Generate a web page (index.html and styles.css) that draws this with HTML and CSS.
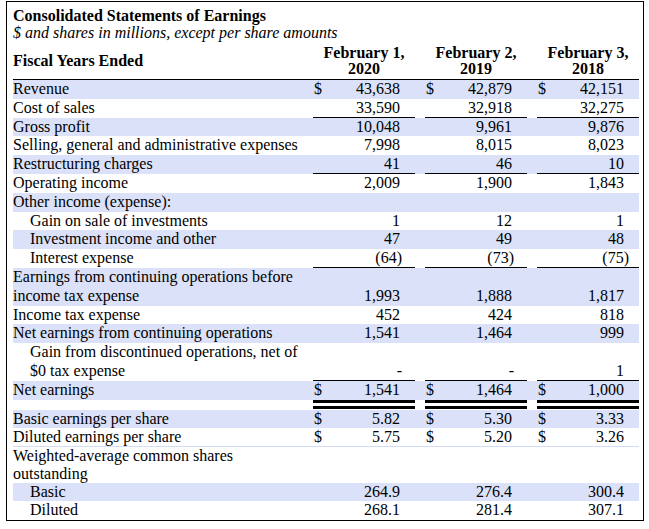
FILE: index.html
```html
<!DOCTYPE html>
<html lang="en">
<head>
<meta charset="utf-8">
<title>Consolidated Statements of Earnings</title>
<link rel="stylesheet" href="styles.css">
</head>
<body>
<div class="sheet">
  <div class="title">
    <div class="heading">Consolidated Statements of Earnings</div>
    <div class="subtitle">$ and shares in millions, except per share amounts</div>
  </div>
  <div class="head">
    <div class="hlbl">Fiscal Years Ended</div>
    <div class="hcol">February 1,<br>2020</div>
    <div class="hcol">February 2,<br>2019</div>
    <div class="hcol">February 3,<br>2018</div>
  </div>

  <div class="g1">
    <div class="row shade">
      <div class="lbl">Revenue</div>
      <div class="val"><span>$</span><span class="n">43,638</span></div>
      <div class="val"><span>$</span><span class="n">42,879</span></div>
      <div class="val"><span>$</span><span class="n">42,151</span></div>
    </div>
    <div class="row">
      <div class="lbl">Cost of sales</div>
      <div class="val ul"><span class="n">33,590</span></div>
      <div class="val ul"><span class="n">32,918</span></div>
      <div class="val ul"><span class="n">32,275</span></div>
    </div>
    <div class="row shade">
      <div class="lbl">Gross profit</div>
      <div class="val"><span class="n">10,048</span></div>
      <div class="val"><span class="n">9,961</span></div>
      <div class="val"><span class="n">9,876</span></div>
    </div>
    <div class="row">
      <div class="lbl">Selling, general and administrative expenses</div>
      <div class="val"><span class="n">7,998</span></div>
      <div class="val"><span class="n">8,015</span></div>
      <div class="val"><span class="n">8,023</span></div>
    </div>
    <div class="row shade">
      <div class="lbl">Restructuring charges</div>
      <div class="val ul"><span class="n">41</span></div>
      <div class="val ul"><span class="n">46</span></div>
      <div class="val ul"><span class="n">10</span></div>
    </div>
    <div class="row">
      <div class="lbl">Operating income</div>
      <div class="val"><span class="n">2,009</span></div>
      <div class="val"><span class="n">1,900</span></div>
      <div class="val"><span class="n">1,843</span></div>
    </div>
    <div class="row shade">
      <div class="lbl">Other income (expense):</div>
      <div class="val"></div>
      <div class="val"></div>
      <div class="val"></div>
    </div>
    <div class="row">
      <div class="lbl ind">Gain on sale of investments</div>
      <div class="val"><span class="n">1</span></div>
      <div class="val"><span class="n">12</span></div>
      <div class="val"><span class="n">1</span></div>
    </div>
    <div class="row shade">
      <div class="lbl ind">Investment income and other</div>
      <div class="val"><span class="n">47</span></div>
      <div class="val"><span class="n">49</span></div>
      <div class="val"><span class="n">48</span></div>
    </div>
    <div class="row">
      <div class="lbl ind">Interest expense</div>
      <div class="val ul"><span class="n neg">(64)</span></div>
      <div class="val ul"><span class="n neg">(73)</span></div>
      <div class="val ul"><span class="n neg neg-far">(75)</span></div>
    </div>
    <div class="row two shade">
      <div class="lbl">Earnings from continuing operations before<br>income tax expense</div>
      <div class="val"><span class="n">1,993</span></div>
      <div class="val"><span class="n">1,888</span></div>
      <div class="val"><span class="n">1,817</span></div>
    </div>
    <div class="row">
      <div class="lbl">Income tax expense</div>
      <div class="val"><span class="n">452</span></div>
      <div class="val"><span class="n">424</span></div>
      <div class="val"><span class="n">818</span></div>
    </div>
    <div class="row shade">
      <div class="lbl">Net earnings from continuing operations</div>
      <div class="val"><span class="n">1,541</span></div>
      <div class="val"><span class="n">1,464</span></div>
      <div class="val"><span class="n">999</span></div>
    </div>
    <div class="row two">
      <div class="lbl ind">Gain from discontinued operations, net of<br>$0 tax expense</div>
      <div class="val ul"><span class="n neg">-</span></div>
      <div class="val ul"><span class="n neg">-</span></div>
      <div class="val ul"><span class="n">1</span></div>
    </div>
    <div class="row shade">
      <div class="lbl">Net earnings</div>
      <div class="val"><span>$</span><span class="n">1,541</span></div>
      <div class="val"><span>$</span><span class="n">1,464</span></div>
      <div class="val"><span>$</span><span class="n">1,000</span></div>
    </div>
    <div class="rules">
      <div></div>
      <div class="dbl"></div>
      <div class="dbl"></div>
      <div class="dbl"></div>
    </div>
  </div>

  <div class="g2">
    <div class="row shade">
      <div class="lbl">Basic earnings per share</div>
      <div class="val"><span>$</span><span class="n">5.82</span></div>
      <div class="val"><span>$</span><span class="n">5.30</span></div>
      <div class="val"><span>$</span><span class="n">3.33</span></div>
    </div>
    <div class="row">
      <div class="lbl">Diluted earnings per share</div>
      <div class="val"><span>$</span><span class="n">5.75</span></div>
      <div class="val"><span>$</span><span class="n">5.20</span></div>
      <div class="val"><span>$</span><span class="n">3.26</span></div>
    </div>
    <div class="sep"></div>
    <div class="row two">
      <div class="lbl">Weighted-average common shares<br>outstanding</div>
      <div class="val"></div>
      <div class="val"></div>
      <div class="val"></div>
    </div>
    <div class="row shade">
      <div class="lbl ind">Basic</div>
      <div class="val"><span class="n">264.9</span></div>
      <div class="val"><span class="n">276.4</span></div>
      <div class="val"><span class="n">300.4</span></div>
    </div>
    <div class="row">
      <div class="lbl ind">Diluted</div>
      <div class="val"><span class="n">268.1</span></div>
      <div class="val"><span class="n">281.4</span></div>
      <div class="val"><span class="n">307.1</span></div>
    </div>
  </div>
</div>
</body>
</html>
```

FILE: styles.css
```css
html, body {
  margin: 0;
  padding: 0;
  background: #ffffff;
}

body {
  font-family: "Liberation Serif", "Times New Roman", serif;
  font-size: 16px;
  color: #000000;
}

.sheet {
  margin: 1px 0 0 6px;
  width: 638px;
  box-sizing: border-box;
  border: 1px solid #000000;
  padding: 4.6px 4px 1px 6px;
}

.title {
  line-height: 17px;
}

.heading {
  font-weight: bold;
}

.subtitle {
  font-style: italic;
}

.head {
  display: grid;
  grid-template-columns: 290px repeat(3, 102px);
  column-gap: 10px;
  align-items: center;
  margin-top: 4.8px;
  padding-bottom: 1.6px;
  border-bottom: 1px solid #000000;
  font-weight: bold;
}

.hlbl {
  line-height: 18.7px;
}

.hcol {
  text-align: center;
  line-height: 16px;
}

.row {
  display: grid;
  grid-template-columns: 290px repeat(3, 102px);
  column-gap: 10px;
  height: 18.8px;
  line-height: 18.8px;
}

.row.two {
  height: 37.6px;
}

.g2 .row {
  height: 18px;
  line-height: 18px;
}

.g2 .row.two {
  height: 36px;
}

.shade {
  background: #dbe1f8;
}

.lbl {
  white-space: nowrap;
}

.ind {
  padding-left: 17px;
}

.val {
  display: flex;
  justify-content: space-between;
  align-items: flex-end;
  padding: 0 15px 0 1px;
}

.val .n {
  margin-left: auto;
}

.val .neg {
  margin-right: -2px;
}

.val .neg-far {
  margin-right: -5px;
}

.ul {
  box-shadow: inset 0 -1px 0 #000000;
}

.rules {
  display: grid;
  grid-template-columns: 290px repeat(3, 102px);
  column-gap: 10px;
  height: 10px;
}

.dbl {
  height: 9px;
  box-sizing: border-box;
  border-top: 3px solid #000000;
  border-bottom: 3px solid #000000;
}

.sep {
  height: 1px;
  background: #d3dcf6;
}
```
